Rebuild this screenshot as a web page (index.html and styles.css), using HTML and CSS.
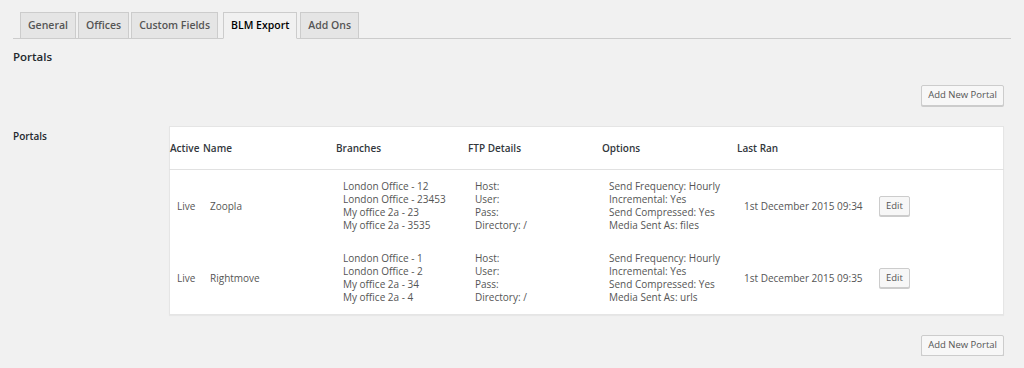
FILE: index.html
```html
<!DOCTYPE html>
<html lang="en">

<head>
    <meta charset="UTF-8">
    <meta name="viewport" content="width=device-width, initial-scale=1.0">
    <title>Settings - BLM Export</title>
    <link rel="stylesheet" href="styles.css">
</head>

<body>

    <div class="wrap">

        <!-- Tabs -->
        <nav class="nav-tabs">
            <a class="nav-tab" href="#">General</a>
            <a class="nav-tab" href="#">Offices</a>
            <a class="nav-tab" href="#">Custom Fields</a>
            <a class="nav-tab nav-tab-active" href="#">BLM Export</a>
            <a class="nav-tab" href="#">Add Ons</a>
        </nav>

        <h3 class="section-title">Portals</h3>

        <div class="actions">
            <a class="button" href="#">Add New Portal</a>
        </div>

        <!-- Portals table -->
        <div class="form-row">
            <div class="form-label">Portals</div>
            <table class="portals">
                <thead>
                    <tr>
                        <th class="col-active">Active</th>
                        <th class="col-name">Name</th>
                        <th class="col-branches">Branches</th>
                        <th class="col-ftp">FTP Details</th>
                        <th class="col-options">Options</th>
                        <th class="col-ran">Last Ran</th>
                        <th></th>
                    </tr>
                </thead>
                <tbody>
                    <tr>
                        <td>Live</td>
                        <td>Zoopla</td>
                        <td>London Office - 12<br>London Office - 23453<br>My office 2a - 23<br>My office 2a - 3535</td>
                        <td>Host: <br>User: <br>Pass: <br>Directory: /</td>
                        <td>Send Frequency: Hourly<br>Incremental: Yes<br>Send Compressed: Yes<br>Media Sent As: files</td>
                        <td>1st December 2015 09:34</td>
                        <td><a class="button button-small" href="#">Edit</a></td>
                    </tr>
                    <tr>
                        <td>Live</td>
                        <td>Rightmove</td>
                        <td>London Office - 1<br>London Office - 2<br>My office 2a - 34<br>My office 2a - 4</td>
                        <td>Host: <br>User: <br>Pass: <br>Directory: /</td>
                        <td>Send Frequency: Hourly<br>Incremental: Yes<br>Send Compressed: Yes<br>Media Sent As: urls</td>
                        <td>1st December 2015 09:35</td>
                        <td><a class="button button-small" href="#">Edit</a></td>
                    </tr>
                </tbody>
            </table>
        </div>

        <div class="actions actions-bottom">
            <a class="button" href="#">Add New Portal</a>
        </div>

    </div>

</body>

</html>
```

FILE: styles.css
```css
/* General */
body {
    margin: 0;
    font-family: "Open Sans", sans-serif;
    font-size: 10px;
    background: #f1f1f1;
    color: #444;
}

.wrap {
    padding: 12px 20px 0 13px;
}

/* Tabs */
.nav-tabs {
    display: flex;
    gap: 2px;
    padding-left: 7px;
    border-bottom: 1px solid #ccc;
    margin-right: -7px;
}

.nav-tab {
    display: block;
    padding: 0 7px;
    height: 25px;
    line-height: 25px;
    margin-bottom: -1px;
    border: 1px solid #ccc;
    background: #e5e5e5;
    color: #555;
    font-size: 10.5px;
    font-weight: 600;
    text-decoration: none;
}

.nav-tab-active {
    background: #f1f1f1;
    border-bottom-color: #f1f1f1;
    color: #000;
    margin-left: 3px;
    margin-right: 1px;
}

.section-title {
    margin: 10px 0 0;
    font-size: 11.5px;
    font-weight: 600;
    color: #23282d;
    line-height: 16px;
}

/* Buttons */
.actions {
    display: flex;
    justify-content: flex-end;
    margin-top: 20px;
}

.actions-bottom {
    margin-top: 20px;
}

.button {
    display: inline-block;
    height: 19px;
    line-height: 18px;
    padding: 0 6px;
    border: 1px solid #ccc;
    border-radius: 2px;
    background: #f7f7f7;
    box-shadow: 0 1px 0 #ccc;
    color: #555;
    font-size: 9.5px;
    text-decoration: none;
}

.button-small {
    height: 18px;
    line-height: 17px;
    padding: 0 6px;
}

/* Form row */
.form-row {
    display: flex;
    margin-top: 20px;
}

.form-label {
    width: 156px;
    flex-shrink: 0;
    padding-top: 3px;
    font-weight: 600;
    color: #23282d;
}

/* Table */
.portals {
    flex-grow: 1;
    table-layout: fixed;
    border-collapse: collapse;
    background: #fff;
    border: 1px solid #e5e5e5;
    box-shadow: 0 1px 1px rgba(0, 0, 0, 0.04);
    line-height: 13px;
    white-space: nowrap;
}

.portals th {
    text-align: left;
    font-weight: 600;
    color: #32373c;
    padding: 15px 0 14px;
    border-bottom: 1px solid #e1e1e1;
    vertical-align: middle;
}

.portals td {
    padding: 10px 7px 10px;
    vertical-align: middle;
    color: #555;
}

.col-active { width: 33px; }
.col-name { width: 133px; }
.col-branches { width: 132px; }
.col-ftp { width: 134px; }
.col-options { width: 135px; }
.col-ran { width: 135px; }
```
